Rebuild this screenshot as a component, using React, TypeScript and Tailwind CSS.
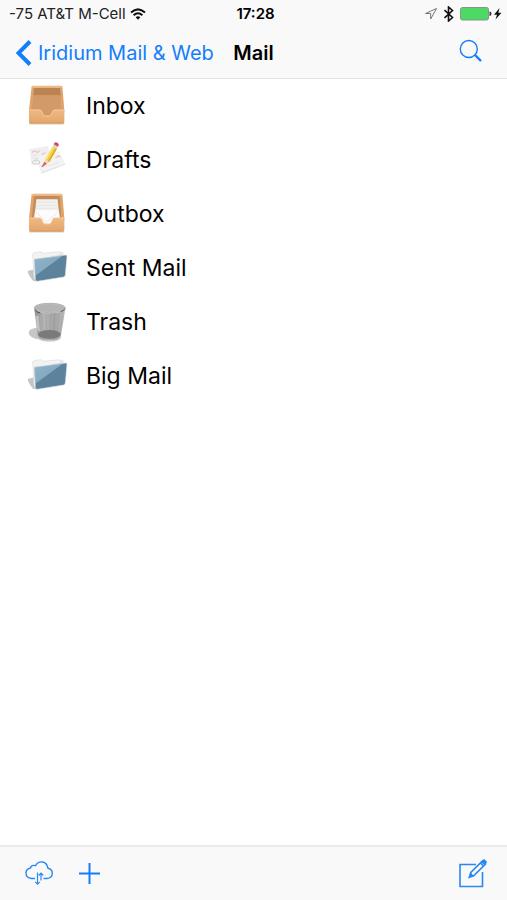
import type { ReactNode } from 'react';

function Picture({ children }: { children: ReactNode }) {
  return (
    <svg aria-hidden="true" viewBox="0 -4 180 162" className="h-[54px] w-[60px] shrink-0">
      {children}
    </svg>
  );
}

function TrayIcon({ id, full }: { id: string; full?: boolean }) {
  return (
    <Picture>
      <defs>
        <linearGradient id={id + '-front'} x1="0" y1="0" x2="0" y2="1">
          <stop offset="0" stopColor="#efb981" />
          <stop offset="1" stopColor="#e3a56b" />
        </linearGradient>
        <linearGradient id={id + '-in'} x1="0" y1="0" x2="0" y2="1">
          <stop offset="0" stopColor="#cf9560" />
          <stop offset="1" stopColor="#dfa877" />
        </linearGradient>
      </defs>
      <path d="M42 129h106v4H42z" fill="#e9dfd5" />
      <path d="M50 18q1-2 4-2h84q3 0 4 2l6 72v8H42v-8z" fill="#e0a46b" />
      <path d="M51 17h90l1 5H50z" fill="#edbd8b" />
      <path d="M58 23h76l5 65v24H50V88z" fill={full ? '#c58a57' : `url(#${id}-in)`} />
      {!full && <path d="M57 23h78l2 22H55z" fill="#bc8352" />}
      {!full && <path d="M55 45h82l2 46v20H51V91z" fill="#d39a69" />}
      {full && (
        <>
          <path d="M64 33h64l6 63v20H58V96z" fill="#f1f1f0" />
          <path d="M63 42h66M62 51h68M61 60h70" stroke="#dfdfdf" strokeWidth="2" />
          <path d="M60 66h72l3 30v20H57V94z" fill="#fcfcfc" />
          <path d="m60 68 35 34 36-34" fill="none" stroke="#dedede" strokeWidth="2" />
        </>
      )}
      <path
        d="M42 88h32q5 0 7 6l3 7q2 5 6 5h13q4 0 6-5l3-7q2-6 7-6h29v37q0 5-5 5H47q-5 0-5-5z"
        fill={`url(#${id}-front)`}
      />
      <path
        d="M43 89h31q5 0 7 6l3 7q2 5 6 5h13q4 0 6-5l3-7q2-6 7-6h28"
        fill="none"
        stroke="#f8cfa2"
        strokeWidth="2.5"
      />
      <path d="M44 128h102" stroke="#d2935a" strokeWidth="2" />
    </Picture>
  );
}

function DraftsIcon() {
  return (
    <Picture>
      <path d="m43 44 56-9 11 47-60 9z" fill="#efefef" />
      <path d="m66 68 66-14 19 37-72 27z" fill="#e4e4e4" />
      <path d="m66 66 65-13 18 36-71 25z" fill="#f3f3f3" />
      <path d="m51 54 10-5 5 6 8-6M80 61l12-6M126 63l11 5M121 70l10-3" fill="none" stroke="#f0b3b8" strokeWidth="3" />
      <path d="m52 64 16-2m-13 11 18-3m24 25 32-10" stroke="#dedede" strokeWidth="2" />
      <path d="M56 91q-8-8 1-12 12-5 17 3 2 8-7 8l-9-2" fill="none" stroke="#cdcdcd" strokeWidth="3" />
      <path d="m88 87 3-12 11 8-11 7z" fill="#f1d6a8" />
      <path d="m82 94 6-12 8 6-8 6z" fill="#e4606e" />
      <path d="M91 75 113 36l13 7-23 40z" fill="#f2cd3c" />
      <path d="m91 75 22-39 4 2-22 40z" fill="#fbe47c" />
      <path d="m99 81 23-40 4 2-23 40z" fill="#dcae2c" />
      <path d="m113 36 3-6 13 7-3 6z" fill="#d5d5d5" />
      <path d="m116 30 2-4q3-4 9-1 6 4 4 8l-2 4z" fill="#dd4756" />
      <path d="m79 97 3-4 6 1-6 4z" fill="#d9505e" />
    </Picture>
  );
}

function FolderIcon({ id }: { id: string }) {
  return (
    <Picture>
      <defs>
        <linearGradient id={id} x1="0" y1="0" x2="1" y2="1">
          <stop offset="0" stopColor="#8fb5ca" />
          <stop offset="1" stopColor="#7ba0b8" />
        </linearGradient>
      </defs>
      <path d="m38 86 20-5 7 36-10-1q-16-18-17-30z" fill="#c5c5c5" />
      <path d="M53 36q0-4 5-5l17-3q5-1 7 5l58-5q6 0 6 5l4 60-86 20q-6 0-7-6z" fill="#e8e9e9" />
      <path d="M53 36q0-4 5-5l17-3q5-1 7 5l52-5 6 9-80 16 2 56q-4-1-5-6z" fill="#f2f2f2" stroke="#d6d8d8" strokeWidth="1.5" />
      <path d="m62 50 90-12q4 0 4 4l-5 56q-1 5-5 6l-79 13q-5 0-6-5l-3-58q0-4 4-5z" fill="#5c829c" />
      <path d="m62 50 83-11-84 61-3-45q0-4 4-5z" fill={`url(#${id})`} />
      <path d="m62 50 90-12q4 0 4 4l-5 56q-1 5-5 6l-79 13q-5 0-6-5l-3-58q0-4 4-5z" fill="none" stroke="#dce3e7" strokeWidth="2" />
    </Picture>
  );
}

function TrashIcon() {
  return (
    <Picture>
      <defs>
        <linearGradient id="bin-side">
          <stop offset="0" stopColor="#8d8d8d" />
          <stop offset=".3" stopColor="#b5b5b5" />
          <stop offset=".65" stopColor="#a4a4a4" />
          <stop offset="1" stopColor="#bdbdbd" />
        </linearGradient>
      </defs>
      <path d="M68 94q-26 2-27 15 1 15 32 20l39 4-10-22z" fill="#c6c6c6" />
      <path d="m57 32 12 91q3 11 34 11t34-11l15-91z" fill="url(#bin-side)" />
      <ellipse cx="103" cy="114" rx="34" ry="13" fill="#7a7a7a" />
      <path
        d="m67 45 9 82M80 49l6 82M93 51l3 82M106 51v83M119 51l-3 81M132 49l-6 81M144 45l-11 80"
        stroke="#7c7c7c"
        strokeWidth="1"
        opacity=".5"
      />
      <path d="m62 58 5 42 8 6-5-48z" fill="#d6d6d6" opacity=".7" />
      <path d="M69 123q3 11 34 11t34-11" fill="none" stroke="#d1d1d1" strokeWidth="4" />
      <ellipse cx="104" cy="35" rx="46" ry="14" fill="#b4b4b4" stroke="#dedede" strokeWidth="4" />
      <ellipse cx="104" cy="35" rx="46" ry="14" fill="none" stroke="#858585" strokeWidth="1.5" />
      <path d="M60 39q3 9 16 11M137 46q10-3 13-9" fill="none" stroke="#4e4e4e" strokeWidth="3" />
    </Picture>
  );
}

const folders = [
  { name: 'Inbox', icon: <TrayIcon id="inbox" /> },
  { name: 'Drafts', icon: <DraftsIcon /> },
  { name: 'Outbox', icon: <TrayIcon id="outbox" full /> },
  { name: 'Sent Mail', icon: <FolderIcon id="sent" /> },
  { name: 'Trash', icon: <TrashIcon /> },
  { name: 'Big Mail', icon: <FolderIcon id="big" /> },
];

function StatusBar() {
  return (
    <div className="grid h-7 grid-cols-[1fr_auto_1fr] items-center pr-[5px] pl-[9px] text-[15px] text-[#222]">
      <div className="flex items-center gap-1 whitespace-nowrap">
        <span>-75 AT&amp;T M-Cell</span>
        <svg aria-label="Wi-Fi" role="img" viewBox="0 0 16 12" className="h-3 w-4" fill="none" stroke="#111" strokeWidth="2">
          <path d="M1 4.6q7-6.4 14 0M3.6 7.3q4.400-4 8.800 0" />
          <path d="M5.600 9.200q2.400-2 4.800 0L8 11.800z" fill="#111" stroke="none" />
        </svg>
      </div>
      <span className="font-semibold text-black">17:28</span>
      <div className="flex items-center justify-end gap-1.5">
        <svg aria-label="Location" role="img" viewBox="0 0 14 14" className="size-3.5" fill="none" stroke="#777" strokeWidth="1">
          <path d="M12.500 1.500 1.500 6.500h5.200v5.500z" />
        </svg>
        <svg aria-label="Bluetooth" role="img" viewBox="0 0 10 16" className="h-4 w-2.5" fill="none" stroke="#111" strokeWidth="1.600">
          <path d="m.5 4 8 7.500L4.500 15V1l4 3.500-8 7.500" />
        </svg>
        <svg aria-label="Battery charging" role="img" viewBox="0 0 42 14" className="h-3.5 w-[42px]">
          <rect x=".5" y=".5" width="28" height="12.500" rx="2" fill="#4cd964" stroke="#8b948c" />
          <path d="M29.500 4.500q2 0 2 2.300t-2 2.300z" fill="#333" />
          <path d="M39.500 1 34 7.700h3L35.500 12.500 41.500 5.800h-3.200z" fill="#111" />
        </svg>
      </div>
    </div>
  );
}

export default function App() {
  return (
    <div className="flex min-h-screen flex-col bg-white font-['Inter','Liberation_Sans',sans-serif] text-black">
      <header className="border-b border-[#e2e2e2] bg-[#f9f9f9]">
        <StatusBar />
        <div className="grid h-[50px] grid-cols-[1fr_auto_1fr] items-center px-4">
          <button type="button" className="flex items-center gap-1.5 text-xl whitespace-nowrap text-[#137efb]">
            <svg aria-hidden="true" viewBox="0 0 16 26" className="h-[26px] w-4" fill="none" stroke="currentColor" strokeWidth="4">
              <path d="M14 1.500 2.500 13l11.500 11.500" />
            </svg>
            Iridium Mail &amp; Web
          </button>
          <h1 className="text-xl font-semibold">Mail</h1>
          <button type="button" aria-label="Search" className="mr-2 mb-1 justify-self-end text-[#137efb]">
            <svg aria-hidden="true" viewBox="0 0 24 24" className="size-6" fill="none" stroke="currentColor">
              <circle cx="9.800" cy="10" r="8.500" strokeWidth="1.400" />
              <path d="m16 16 6 6" strokeWidth="2.400" />
            </svg>
          </button>
        </div>
      </header>

      <main className="flex-1">
        <ul>
          {folders.map((folder) => (
            <li key={folder.name}>
              <button type="button" className="flex h-[54px] w-full items-center gap-[11px] pl-[15px] text-left text-[23px]">
                {folder.icon}
                {folder.name}
              </button>
            </li>
          ))}
        </ul>
      </main>

      <footer className="flex h-[55px] items-center border-t-2 border-[#ebebeb] bg-[#f9f9f9] px-5 pl-6 text-[#2a87f4]">
        <button type="button" aria-label="Sync">
          <svg aria-hidden="true" viewBox="0 0 30 26" className="h-[26px] w-[30px]" fill="none" stroke="currentColor" strokeWidth="1.400">
            <path d="M11 17.500H7.500Q2 17 2 12 2 8 6.500 7 7.500 3.500 11.500 4.700 14 .3 18.500 1q4.500.8 5.300 6Q28.500 8.300 28.300 12.500q-.3 4.500-5.300 5h-3.500" />
            <path d="M13.500 11.500V23m-2.300-2.200 2.300 2.400 2.300-2.400M17 19.500V12.500m-2.300 2 2.300-2.300 2.300 2.300" strokeWidth="1.200" />
          </svg>
        </button>
        <button type="button" aria-label="Add" className="ml-6">
          <svg aria-hidden="true" viewBox="0 0 24 24" className="size-6" fill="none" stroke="#137efb" strokeWidth="2">
            <path d="M11.500 1v21M1 11.500h21" />
          </svg>
        </button>
        <button type="button" aria-label="Compose" className="ml-auto">
          <svg aria-hidden="true" viewBox="0 0 30 30" className="size-[30px]" fill="none" stroke="currentColor" strokeWidth="1.600">
            <path d="M19 5.500H3V27.500h22.500V13" />
            <path d="m12.500 18 1.300-4.500L25.500 2l3 3L16.700 16.700z" fill="#f9f9f9" />
            <path d="m23.500 4 3 3M12.500 18l1.500-3 1.500 1.800z" />
            <path d="M25 3 27 1 29 3 27.500 5z" fill="currentColor" />
          </svg>
        </button>
      </footer>
    </div>
  );
}
